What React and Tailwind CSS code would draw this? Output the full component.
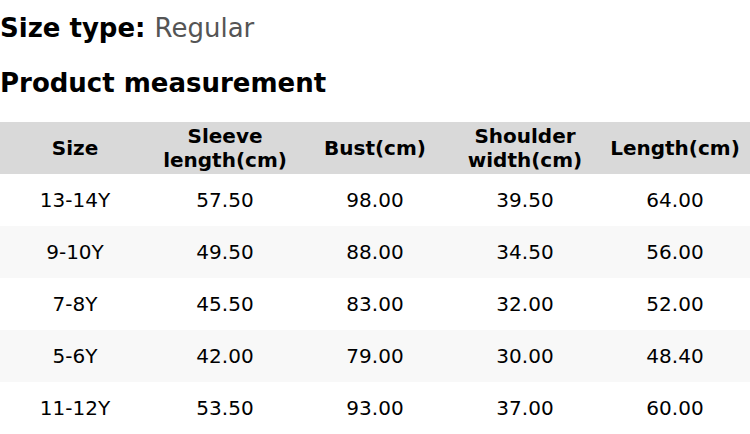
const headers = ["Size", "Sleeve length(cm)", "Bust(cm)", "Shoulder width(cm)", "Length(cm)"];

const rows = [
  ["13-14Y", "57.50", "98.00", "39.50", "64.00"],
  ["9-10Y", "49.50", "88.00", "34.50", "56.00"],
  ["7-8Y", "45.50", "83.00", "32.00", "52.00"],
  ["5-6Y", "42.00", "79.00", "30.00", "48.40"],
  ["11-12Y", "53.50", "93.00", "37.00", "60.00"],
];

export default function App() {
  return (
    <div className="w-[750px] bg-white text-black font-['DejaVu_Sans',sans-serif]">
      <h2 className="pt-[10px] text-[26px] leading-[36px]">
        <span className="font-bold">Size type: </span>
        <span className="text-[#555555]">Regular</span>
      </h2>
      <h2 className="mt-[19px] text-[26px] leading-[36px] font-bold">Product measurement</h2>

      <table className="mt-[21px] w-full table-fixed border-collapse text-[20px]">
        <thead>
          <tr className="bg-[#d9d9d9] h-[52px]">
            {headers.map((h) => (
              <th key={h} className="w-[150px] px-1 font-bold leading-[24px]">
                {h}
              </th>
            ))}
          </tr>
        </thead>
        <tbody>
          {rows.map((r, i) => (
            <tr key={i} className={i % 2 === 1 ? "bg-[#f8f8f8] h-[52px]" : "bg-white h-[52px]"}>
              {r.map((c, j) => (
                <td key={j} className="text-center">
                  {c}
                </td>
              ))}
            </tr>
          ))}
        </tbody>
      </table>
    </div>
  );
}
